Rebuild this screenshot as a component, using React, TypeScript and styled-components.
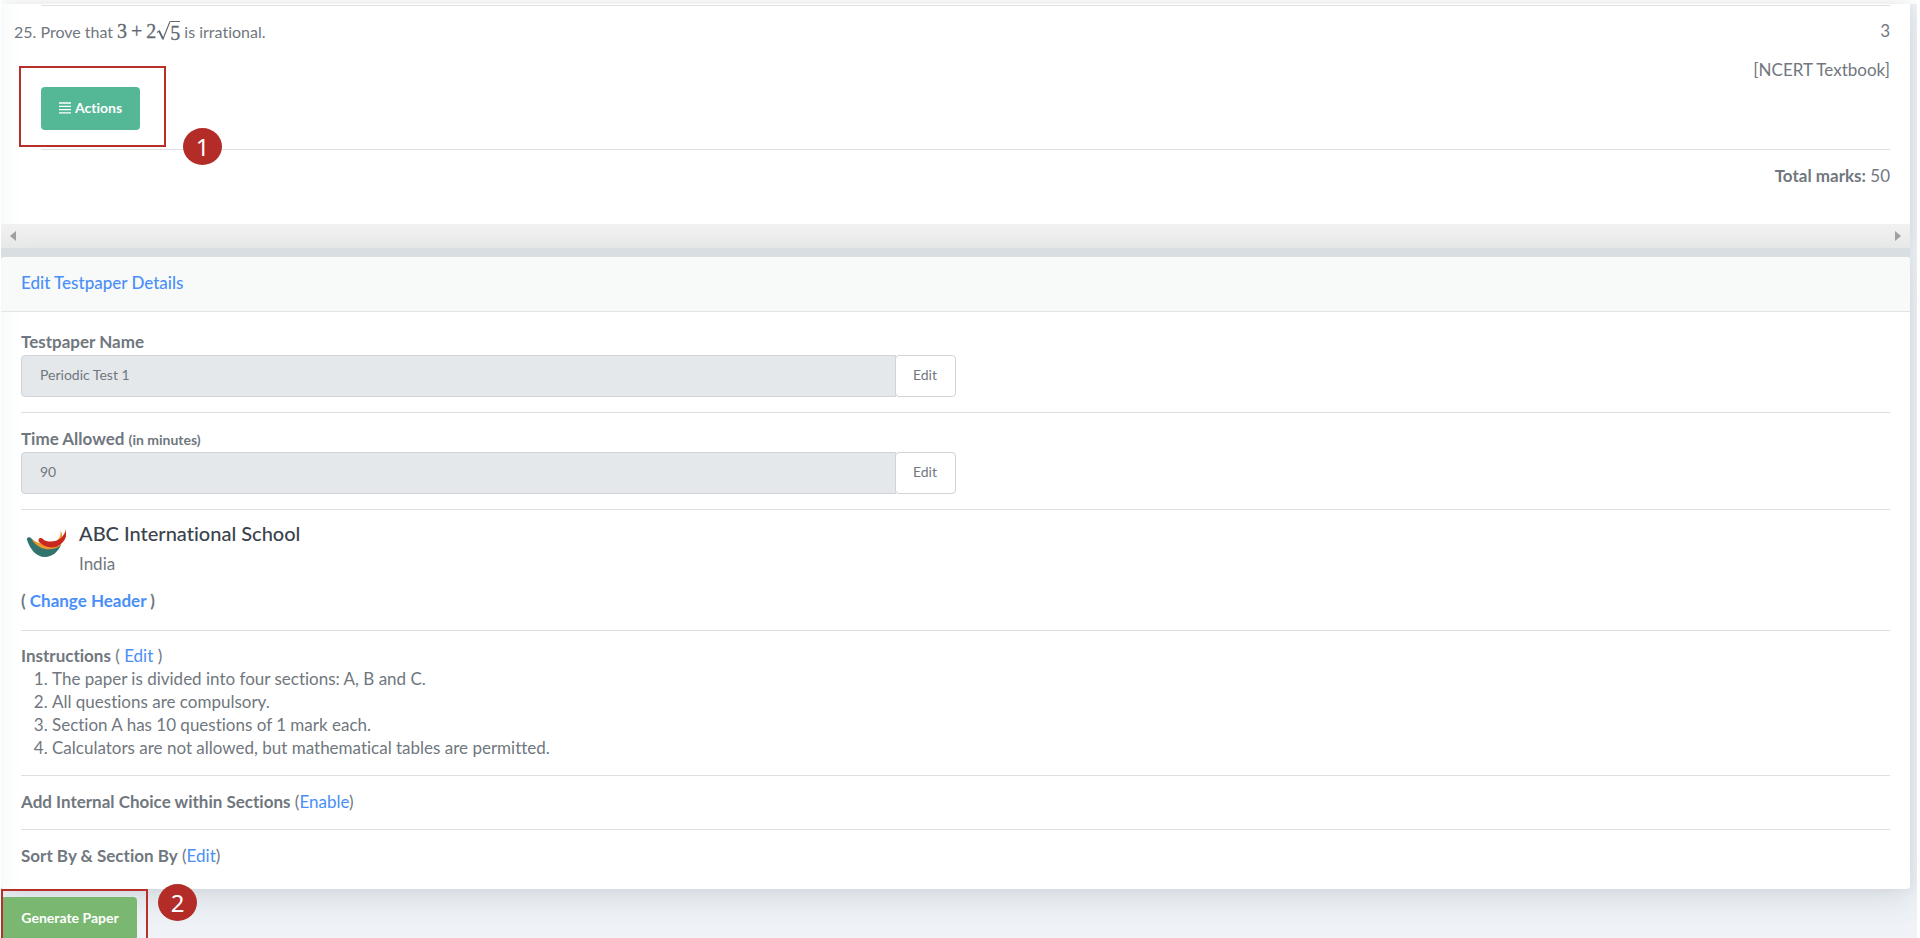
import React from "react";
import styled, { createGlobalStyle } from "styled-components";

const GlobalStyle = createGlobalStyle`
  *, *::before, *::after { box-sizing: border-box; }
  html, body { margin: 0; padding: 0; background: #fff; }
  html { overflow: hidden; }
  body {
    font-family: Lato, "Liberation Sans", sans-serif;
    font-size: 17px;
    line-height: 23px;
    font-variant-ligatures: none;
    color: #70777e;
  }
  a { color: #4a8ff7; text-decoration: none; }
  strong { font-weight: 700; }
`;

const Page = styled.main`
  height: 100vh;
  margin: 0 3px 0 1px;
  padding-top: 4px;
  overflow: hidden;
  background: #fff;
`;

const Backdrop = styled.div`
  min-height: 100%;
  padding-right: 7px;
  background: #eff3f8;
`;

const cardShadow = "0 8px 32px rgba(75, 85, 95, 0.16), 0 0 12px rgba(75, 85, 95, 0.08)";
const cardFill = "linear-gradient(90deg, #f9fafa, #fff 20px)";

const PaperCard = styled.section`
  background: ${cardFill};
  box-shadow: ${cardShadow};
`;

const PaperBody = styled.div`
  height: 220px;
  padding: 1px 20px 0 40px;
`;

const Rule = styled.hr<{ $top?: number; $bottom?: number }>`
  height: 1px;
  margin: ${({ $top = 0 }) => $top}px 0 ${({ $bottom = 0 }) => $bottom}px;
  border: 0;
  background: #dddfe1;
`;

const Question = styled.div`
  display: flex;
  justify-content: space-between;
  height: 143px;
  padding-top: 13px;
  margin-left: -27px;
`;

const Prompt = styled.div`
  display: flex;
  flex-direction: column;
  align-items: flex-start;
`;

const QuestionText = styled.div`
  display: flex;
  align-items: center;
  gap: 4px;
  height: 24px;
  font-size: 16px;
  white-space: nowrap;
`;

const MathText = styled.span`
  display: inline-flex;
  align-items: center;
  font-family: "Liberation Serif", serif;
  font-size: 20px;
  color: #626a71;
  -webkit-text-stroke: 0.3px currentColor;
`;

const Operator = styled.span`
  margin: 0 4px;
`;

const Radical = styled.svg`
  width: 14px;
  height: 20px;
`;

const Radicand = styled.span`
  height: 20px;
  line-height: 22px;
  border-top: 1px solid #626a71;
`;

const Marks = styled.div`
  display: flex;
  flex-direction: column;
  gap: 16px;
  text-align: right;
`;

const Total = styled.div`
  padding-top: 14px;
  text-align: right;
`;

const Callout = styled.div<{ $kind: "actions" | "generate" }>`
  position: relative;
  width: 147px;
  border: 2px solid #b82e28;
  ${({ $kind }) =>
    $kind === "actions"
      ? "height: 81px; margin: 23px 0 0 5px; padding: 19px 20px;"
      : "height: 64px; padding: 6px 0 0;"}
`;

const StepBadge = styled.span<{ $kind: "actions" | "generate" }>`
  position: absolute;
  top: ${({ $kind }) => ($kind === "actions" ? 60 : -7)}px;
  left: ${({ $kind }) => ($kind === "actions" ? 162 : 155)}px;
  display: flex;
  align-items: center;
  justify-content: center;
  width: 39px;
  height: 37px;
  border-radius: 50%;
  background: #b32c27;
  color: #fff;
  font-family: "Noto Sans", sans-serif;
  font-size: 24px;
  line-height: 37px;
`;

const SolidButton = styled.button<{ $tone: string; $width: number; $square?: boolean }>`
  display: flex;
  align-items: center;
  justify-content: center;
  gap: 4px;
  width: ${({ $width }) => $width}px;
  height: 43px;
  padding: 0 0 2px;
  border: 0;
  border-radius: ${({ $square }) => ($square ? "0 4px 4px 0" : "4px")};
  background: ${({ $tone }) => $tone};
  color: #fff;
  font: 700 14px/20px Lato, "Liberation Sans", sans-serif;
  font-variant-ligatures: none;
  white-space: nowrap;
`;

const ScrollTrack = styled.div`
  display: flex;
  align-items: center;
  justify-content: space-between;
  height: 24px;
  padding: 0 9px;
  background: linear-gradient(#f1f1f1, #e9eaea);
`;

const Arrow = styled.svg`
  width: 6px;
  height: 10px;
  fill: #a0a0a0;
`;

const Strip = styled.div`
  position: relative;
  height: 9px;
  background: #d9dee2;
`;

const DetailsCard = styled.section`
  border-radius: 4px;
  background: ${cardFill};
  box-shadow: ${cardShadow};
`;

const CardHeader = styled.header`
  height: 55px;
  padding: 14px 20px 0;
  border-bottom: 1px solid #e2e5e6;
  border-radius: 4px 4px 0 0;
  background: #f8faf9;
`;

const CardTitle = styled.h2`
  margin: 0;
  font-size: 17px;
  font-weight: 500;
  line-height: 23px;
`;

const CardBody = styled.div`
  padding: 18px 20px 22px;
`;

const FieldLabel = styled.label`
  display: block;
  height: 25px;
  font-weight: 700;

  small { font-size: 14px; }
`;

const InputGroup = styled.div`
  display: flex;
  width: 50%;
  height: 42px;
`;

const TextInput = styled.input`
  flex: 1;
  min-width: 0;
  padding: 0 18px 2px;
  border: 1px solid #ced4da;
  border-radius: 4px 0 0 4px;
  background: #e4e8eb;
  color: #70777e;
  font: 400 14px/20px Lato, "Liberation Sans", sans-serif;
`;

const EditButton = styled.button`
  width: 61px;
  margin-left: -1px;
  padding: 0 0 2px;
  border: 1px solid #ced4da;
  border-radius: 4px;
  background: #fff;
  color: #70777e;
  font: 400 14px/20px Lato, "Liberation Sans", sans-serif;
`;

const School = styled.div`
  display: flex;
  gap: 13px;
  height: 65px;
  padding-left: 4px;
`;

const Logo = styled.svg`
  width: 41px;
  height: 29px;
  margin-top: 5px;
`;

const SchoolName = styled.h3`
  margin: 0 0 9px;
  color: #3a434c;
  font-size: 20px;
  font-weight: 500;
  line-height: 19px;
`;

const Line = styled.div`
  height: 23px;
`;

const Instructions = styled.ol`
  height: 92px;
  margin: 0;
  padding-left: 31px;
`;

const RadicalSign = () => (
  <Radical viewBox="0 0 14 20" fill="none" stroke="#626a71" aria-hidden="true">
    <path d="M1 11.5 3.2 10 7 18 14 .5" strokeWidth="1.2" />
    <path d="M3.2 10.2 7 17.8" strokeWidth="1.8" />
  </Radical>
);

const ListIcon = () => (
  <svg width="12" height="12" viewBox="0 0 12 12" stroke="#fff" strokeWidth="1.3" aria-hidden="true">
    <path d="M0 1h12M0 4.3h12M0 7.6h12M0 10.9h12" />
  </svg>
);

const SchoolLogo = () => (
  <Logo viewBox="-2 0 41 29" aria-hidden="true">
    <path d="M0 11C-1 8 3 7 5 10 10 16 19 20 34 16 31 23 25 28 18 28 9 28 3 20 0 11Z" fill="#32736e" />
    <path d="M4.500 10C10 14 20 17 27 14 33 10 34 6 33.500 1 36 6 36 12 33 17 24 23 11 21 4.500 10Z" fill="#ed982e" />
    <path d="M12 13C10 9 14 7.500 17 11 22 13.500 29 13 34 9 37 6 38.500 3 39 0 41 7 37 14 31 17 25 20 17 18 12 13Z" fill="#c8291e" />
  </Logo>
);

const FIELDS = [
  { id: "paper-name", label: "Testpaper Name", note: "", value: "Periodic Test 1" },
  { id: "time-allowed", label: "Time Allowed", note: "(in minutes)", value: "90" },
];

const INSTRUCTIONS = [
  "The paper is divided into four sections: A, B and C.",
  "All questions are compulsory.",
  "Section A has 10 questions of 1 mark each.",
  "Calculators are not allowed, but mathematical tables are permitted.",
];

export default function App() {
  return (
    <>
      <GlobalStyle />
      <Page>
        <Backdrop>
          <PaperCard>
            <PaperBody>
              <Rule />
              <Question>
                <Prompt>
                  <QuestionText>
                    <span>25. Prove that</span>
                    <MathText>
                      3<Operator>+</Operator>2
                      <RadicalSign />
                      <Radicand>5</Radicand>
                    </MathText>
                    <span>is irrational.</span>
                  </QuestionText>
                  <Callout $kind="actions">
                    <SolidButton type="button" $tone="#54b796" $width={99}>
                      <ListIcon />
                      Actions
                    </SolidButton>
                    <StepBadge $kind="actions">1</StepBadge>
                  </Callout>
                </Prompt>
                <Marks>
                  <span>3</span>
                  <span>[NCERT Textbook]</span>
                </Marks>
              </Question>
              <Rule />
              <Total>
                <strong>Total marks:</strong> 50
              </Total>
            </PaperBody>
            <ScrollTrack>
              <Arrow viewBox="0 0 6 10"><path d="M6 0v10L0 5Z" /></Arrow>
              <Arrow viewBox="0 0 6 10"><path d="M0 0v10l6-5Z" /></Arrow>
            </ScrollTrack>
          </PaperCard>
          <Strip />
          <DetailsCard>
            <CardHeader>
              <CardTitle><a href="#details">Edit Testpaper Details</a></CardTitle>
            </CardHeader>
            <CardBody>
              {FIELDS.map((field) => (
                <React.Fragment key={field.id}>
                  <FieldLabel htmlFor={field.id}>
                    {field.label} {field.note && <small>{field.note}</small>}
                  </FieldLabel>
                  <InputGroup>
                    <TextInput id={field.id} defaultValue={field.value} readOnly />
                    <EditButton type="button">Edit</EditButton>
                  </InputGroup>
                  <Rule $top={15} $bottom={14} />
                </React.Fragment>
              ))}
              <School>
                <SchoolLogo />
                <div>
                  <SchoolName>ABC International School</SchoolName>
                  <Line>India</Line>
                </div>
              </School>
              <Line>
                <strong>( <a href="#header">Change Header</a> )</strong>
              </Line>
              <Rule $top={18} $bottom={13} />
              <Line>
                <strong>Instructions</strong> ( <a href="#instructions">Edit</a> )
              </Line>
              <Instructions>
                {INSTRUCTIONS.map((text) => <li key={text}>{text}</li>)}
              </Instructions>
              <Rule $top={16} $bottom={14} />
              <Line>
                <strong>Add Internal Choice within Sections</strong> (<a href="#choice">Enable</a>)
              </Line>
              <Rule $top={16} $bottom={14} />
              <Line>
                <strong>Sort By &amp; Section By</strong> (<a href="#sort">Edit</a>)
              </Line>
            </CardBody>
          </DetailsCard>
          <Callout $kind="generate">
            <SolidButton type="button" $tone="#7ab872" $width={134} $square>
              Generate Paper
            </SolidButton>
            <StepBadge $kind="generate">2</StepBadge>
          </Callout>
        </Backdrop>
      </Page>
    </>
  );
}
